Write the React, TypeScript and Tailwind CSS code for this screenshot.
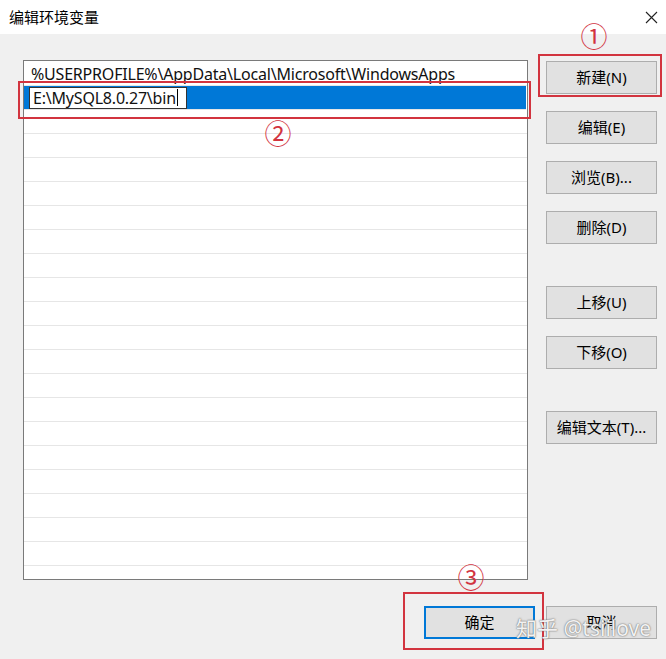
import React from 'react';

const font = { fontFamily: '"Noto Sans", "Noto Sans CJK SC", sans-serif' };

const rows = Array.from({ length: 22 }, (_, i) => i);

function Btn({ label, primary }: { label: string; primary?: boolean }) {
  return (
    <div
      className={
        primary
          ? 'w-[111px] h-[33px] flex items-center justify-center bg-[#e1e1e1] border-2 border-[#0078d7] text-[15px] text-black'
          : 'w-[111px] h-[33px] flex items-center justify-center bg-[#e1e1e1] border border-[#adadad] text-[15px] text-black'
      }
    >
      {label}
    </div>
  );
}

export default function App() {
  return (
    <div className="relative w-[666px] h-[659px] bg-[#f0f0f0] overflow-hidden" style={font}>
      {/* title bar */}
      <div className="h-[34px] bg-white flex items-center justify-between pl-[9px] pr-[7px]">
        <span className="text-[15px] text-black leading-none">编辑环境变量</span>
        <svg width="13" height="13" viewBox="0 0 13 13" className="mr-[1px]">
          <path d="M1 1L12 12M12 1L1 12" stroke="#222" strokeWidth="1.1" />
        </svg>
      </div>

      <div className="flex pl-[23px] pt-[26px]">
        {/* list */}
        <div className="w-[505px] h-[520px] border border-[#7a7a7a] bg-white pt-[1px] overflow-hidden">
          {rows.map((i) => (
            <div
              key={i}
              className={
                i === 1
                  ? 'h-[24px] border-b border-[#e6e6e6] bg-[#0078d7] mr-[1px] flex items-center'
                  : 'h-[24px] border-b border-[#e6e6e6] flex items-center'
              }
            >
              {i === 0 && (
                <span className="pl-[7px] text-[16px] text-[#111] tracking-[-0.2px]">
                  %USERPROFILE%\AppData\Local\Microsoft\WindowsApps
                </span>
              )}
              {i === 1 && (
                <div className="ml-[5px] w-[158px] h-[22px] bg-white border border-[#333] flex items-center pl-[3px]">
                  <span className="text-[16px] text-[#111] tracking-[-0.2px]">E:\MySQL8.0.27\bin</span>
                  <span className="w-[1px] h-[17px] bg-black ml-[1px]" />
                </div>
              )}
            </div>
          ))}
        </div>

        {/* buttons */}
        <div className="flex flex-col ml-[18px] pt-[1px]">
          <Btn label="新建(N)" />
          <div className="mt-[17px]"><Btn label="编辑(E)" /></div>
          <div className="mt-[17px]"><Btn label="浏览(B)..." /></div>
          <div className="mt-[17px]"><Btn label="删除(D)" /></div>
          <div className="mt-[42px]"><Btn label="上移(U)" /></div>
          <div className="mt-[17px]"><Btn label="下移(O)" /></div>
          <div className="mt-[42px]"><Btn label="编辑文本(T)..." /></div>
        </div>
      </div>

      {/* dialog buttons */}
      <div className="flex justify-end gap-[11px] pr-[9px] mt-[26px]">
        <Btn label="确定" primary />
        <Btn label="取消" />
      </div>

      {/* annotations */}
      <div className="absolute left-[538px] top-[54px] w-[124px] h-[43px] border-2 border-[#d2343f]" />
      <div className="absolute left-[580px] top-[21px] w-[28px] text-center text-[27px] leading-[32px] text-[#d2343f]">①</div>

      <div className="absolute left-[18px] top-[81px] w-[513px] h-[38px] border-2 border-[#d2343f]" />
      <div className="absolute left-[264px] top-[118px] w-[28px] text-center text-[27px] leading-[32px] text-[#d2343f]">②</div>

      <div className="absolute left-[403px] top-[592px] w-[141px] h-[58px] border-2 border-[#d2343f]" />
      <div className="absolute left-[457px] top-[562px] w-[28px] text-center text-[27px] leading-[32px] text-[#d2343f]">③</div>

      {/* watermark */}
      <div className="absolute left-[516px] top-[614px] text-[21px] leading-[28px] text-white/90 [text-shadow:0_0_2px_#777,0_0_1px_#777]">
        知乎 @tsiilove
      </div>
    </div>
  );
}
